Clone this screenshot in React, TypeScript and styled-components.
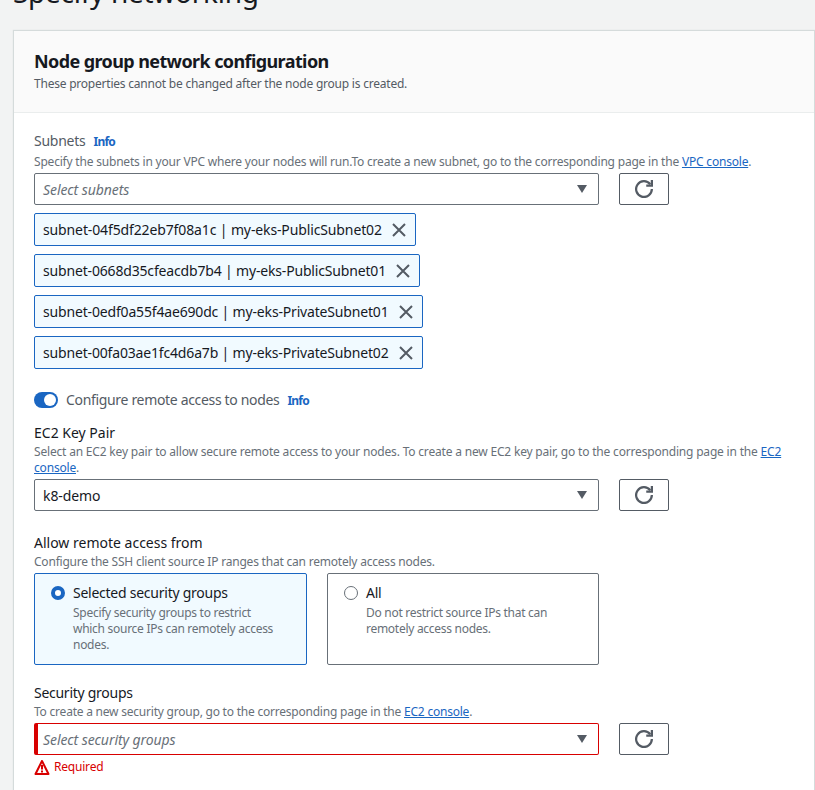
import styled, { createGlobalStyle } from "styled-components";

const GlobalStyle = createGlobalStyle`
  html, body {
    margin: 0;
    height: 790px;
    overflow: hidden;
    background: #f2f3f3;
  }
  body {
    font-family: "Noto Sans", "Open Sans", sans-serif;
    color: #16191f;
  }
`;

const Page = styled.div`
  padding: 0 1px 0 14px;
`;
const PageTitle = styled.h1`
  margin: -26px 0 0 -1px;
  height: 57px;
  font-size: 28px;
  line-height: 36px;
  font-weight: 400;
  letter-spacing: -0.28px;
`;
const Card = styled.section`
  background: #fff;
  box-shadow: 0 0 1px 1px #d5dbdb;
`;
const CardHeader = styled.header`
  height: 82px;
  box-sizing: border-box;
  padding: 19px 20px 0;
  background: #fafafa;
  border-bottom: 1px solid #eaeded;
`;
const CardTitle = styled.h2`
  margin: 0;
  font-size: 18px;
  line-height: 22px;
  font-weight: 700;
  letter-spacing: -0.6px;
`;
const CardDesc = styled.p`
  margin: 2px 0 0;
  font-size: 12px;
  line-height: 20px;
  letter-spacing: -0.22px;
  color: #545b64;
`;
const CardBody = styled.div`
  padding: 17px 20px 40px;
  display: flex;
  flex-direction: column;
`;
const Field = styled.div<{ $top?: number }>`
  margin-top: ${(p) => p.$top ?? 0}px;
`;
const Label = styled.div<{ $muted?: boolean; $track?: number; $gap?: number }>`
  height: 20px;
  font-size: 14px;
  line-height: 22px;
  letter-spacing: ${(p) => p.$track ?? 0}px;
  margin-bottom: ${(p) => p.$gap ?? 1}px;
  color: ${(p) => (p.$muted ? "#545b64" : "#16191f")};
`;
const ToggleLabel = styled(Label)`
  line-height: 20px;
`;
const InfoLink = styled.a`
  margin-left: 8px;
  font-size: 12px;
  font-weight: 700;
  letter-spacing: -0.8px;
  color: #1a66c2;
`;
const Hint = styled.div<{ $track?: number }>`
  padding-top: 1px;
  margin-bottom: 3px;
  font-size: 12px;
  line-height: 16px;
  letter-spacing: ${(p) => p.$track ?? -0.2}px;
  color: #687078;
`;
const Link = styled.a`
  color: #1a66c2;
  text-decoration: underline;
`;
const SelectRow = styled.div`
  display: flex;
  gap: 20px;
`;
const Select = styled.div<{ $error?: boolean }>`
  width: 565px;
  height: 32px;
  box-sizing: border-box;
  display: flex;
  align-items: center;
  justify-content: space-between;
  padding: 0 11px 0 ${(p) => (p.$error ? 5 : 8)}px;
  background: #fff;
  border: 1px solid ${(p) => (p.$error ? "#d80000" : "#687078")};
  border-left-width: ${(p) => (p.$error ? 4 : 1)}px;
  border-radius: 2px;
  font-size: 14px;
  letter-spacing: -0.08px;
  color: #16191f;
`;
const Placeholder = styled.span`
  font-style: italic;
  color: #687078;
`;
const Caret = styled.span`
  width: 0;
  height: 0;
  border-left: 5px solid transparent;
  border-right: 5px solid transparent;
  border-top: 8px solid #545b64;
`;
const RefreshButton = styled.button`
  width: 50px;
  height: 32px;
  box-sizing: border-box;
  padding: 0;
  display: flex;
  align-items: center;
  justify-content: center;
  background: #fff;
  border: 1px solid #545b64;
  border-radius: 2px;
  color: #545b64;
`;
const Tokens = styled.div`
  display: flex;
  flex-direction: column;
  align-items: flex-start;
  gap: 8px;
  margin-top: 8px;
`;
const Token = styled.div`
  height: 33px;
  box-sizing: border-box;
  display: flex;
  align-items: center;
  gap: 9px;
  padding: 0 8px;
  background: #f1faff;
  border: 1px solid #1a66c2;
  border-radius: 2px;
  color: #545b64;
`;
const TokenText = styled.span<{ $track: number }>`
  font-size: 14px;
  letter-spacing: ${(p) => p.$track}px;
  color: #16191f;
`;
const ToggleRow = styled.div`
  display: flex;
  align-items: center;
  gap: 8px;
  margin-top: 21px;
`;
const Toggle = styled.span`
  width: 24px;
  height: 16px;
  border-radius: 8px;
  background: #1a66c2;
  display: flex;
  align-items: center;
  justify-content: flex-end;
  padding-right: 2px;
  box-sizing: border-box;
`;
const Knob = styled.span`
  width: 12px;
  height: 12px;
  border-radius: 50%;
  background: #fff;
`;
const TileGrid = styled.div`
  display: grid;
  grid-template-columns: 273px 272px;
  gap: 20px;
  width: 565px;
`;
const Tile = styled.div<{ $selected?: boolean }>`
  height: 92px;
  box-sizing: border-box;
  display: flex;
  gap: 8px;
  padding: 10px 28px 10px 16px;
  background: ${(p) => (p.$selected ? "#f1faff" : "#fff")};
  border: 1px solid ${(p) => (p.$selected ? "#1a66c2" : "#687078")};
  border-radius: 2px;
`;
const Radio = styled.span<{ $on?: boolean }>`
  flex: none;
  width: 14px;
  height: 14px;
  margin-top: 2px;
  border-radius: 50%;
  box-sizing: border-box;
  background: #fff;
  border: ${(p) => (p.$on ? "4px solid #1a66c2" : "1px solid #687078")};
`;
const TileTitle = styled.div`
  font-size: 14px;
  line-height: 18px;
  letter-spacing: -0.25px;
  color: #16191f;
`;
const TileDesc = styled.div`
  margin-top: 3px;
  font-size: 12px;
  line-height: 16px;
  letter-spacing: -0.28px;
  color: #687078;
`;
const ErrorRow = styled.div`
  display: flex;
  align-items: center;
  gap: 4px;
  margin-top: 4px;
  font-size: 12px;
  line-height: 16px;
  letter-spacing: -0.2px;
  color: #d80000;
`;

const RefreshIcon = () => (
  <svg width="18" height="18" viewBox="0 0 16 16" fill="none" stroke="currentColor" strokeWidth="2">
    <path d="M10 5h5V0" />
    <path d="M15 8a7 7 0 1 1-1.45-4.23" />
  </svg>
);
const CloseIcon = () => (
  <svg width="16" height="16" viewBox="0 0 16 16" fill="none" stroke="currentColor" strokeWidth="2">
    <path d="M2 2l12 12M14 2L2 14" />
  </svg>
);
const WarningIcon = () => (
  <svg width="16" height="16" viewBox="0 0 16 16" fill="none" stroke="currentColor" strokeWidth="2">
    <path d="M8 2L1.5 15h13z" strokeLinejoin="round" />
    <path d="M8 6v4.5M8 11.5v2" />
  </svg>
);

const subnets = [
  { name: "subnet-04f5df22eb7f08a1c | my-eks-PublicSubnet02", track: -0.125 },
  { name: "subnet-0668d35cfeacdb7b4 | my-eks-PublicSubnet01", track: -0.17 },
  { name: "subnet-0edf0a55f4ae690dc | my-eks-PrivateSubnet01", track: -0.17 },
  { name: "subnet-00fa03ae1fc4d6a7b | my-eks-PrivateSubnet02", track: -0.17 },
];

const App = () => (
  <Page>
    <GlobalStyle />
    <PageTitle>Specify networking</PageTitle>
    <Card>
      <CardHeader>
        <CardTitle>Node group network configuration</CardTitle>
        <CardDesc>These properties cannot be changed after the node group is created.</CardDesc>
      </CardHeader>
      <CardBody>
        <Field>
          <Label $muted $track={-0.25} $gap={3}>
            Subnets<InfoLink>Info</InfoLink>
          </Label>
          <Hint>
            Specify the subnets in your VPC where your nodes will run.To create a new subnet, go to
            the corresponding page in the <Link>VPC console</Link>.
          </Hint>
          <SelectRow>
            <Select>
              <Placeholder>Select subnets</Placeholder>
              <Caret />
            </Select>
            <RefreshButton>
              <RefreshIcon />
            </RefreshButton>
          </SelectRow>
          <Tokens>
            {subnets.map((s) => (
              <Token key={s.name}>
                <TokenText $track={s.track}>{s.name}</TokenText>
                <CloseIcon />
              </Token>
            ))}
          </Tokens>
        </Field>
        <ToggleRow>
          <Toggle>
            <Knob />
          </Toggle>
          <ToggleLabel $muted $track={-0.33} $gap={0}>
            Configure remote access to nodes<InfoLink>Info</InfoLink>
          </ToggleLabel>
        </ToggleRow>
        <Field $top={12}>
          <Label>EC2 Key Pair</Label>
          <Hint $track={-0.185}>
            Select an EC2 key pair to allow secure remote access to your nodes. To create a new EC2
            key pair, go to the corresponding page in the <Link>EC2 console</Link>.
          </Hint>
          <SelectRow>
            <Select>
              k8-demo
              <Caret />
            </Select>
            <RefreshButton>
              <RefreshIcon />
            </RefreshButton>
          </SelectRow>
        </Field>
        <Field $top={21}>
          <Label>Allow remote access from</Label>
          <Hint $track={-0.21}>Configure the SSH client source IP ranges that can remotely access nodes.</Hint>
          <TileGrid>
            <Tile $selected>
              <Radio $on />
              <div>
                <TileTitle>Selected security groups</TileTitle>
                <TileDesc>Specify security groups to restrict which source IPs can remotely access nodes.</TileDesc>
              </div>
            </Tile>
            <Tile>
              <Radio />
              <div>
                <TileTitle>All</TileTitle>
                <TileDesc>Do not restrict source IPs that can remotely access nodes.</TileDesc>
              </div>
            </Tile>
          </TileGrid>
        </Field>
        <Field $top={17}>
          <Label $track={-0.27}>Security groups</Label>
          <Hint $track={-0.22}>
            To create a new security group, go to the corresponding page in the{" "}
            <Link>EC2 console</Link>.
          </Hint>
          <SelectRow>
            <Select $error>
              <Placeholder>Select security groups</Placeholder>
              <Caret />
            </Select>
            <RefreshButton>
              <RefreshIcon />
            </RefreshButton>
          </SelectRow>
          <ErrorRow>
            <WarningIcon />
            Required
          </ErrorRow>
        </Field>
      </CardBody>
    </Card>
  </Page>
);

export default App;
